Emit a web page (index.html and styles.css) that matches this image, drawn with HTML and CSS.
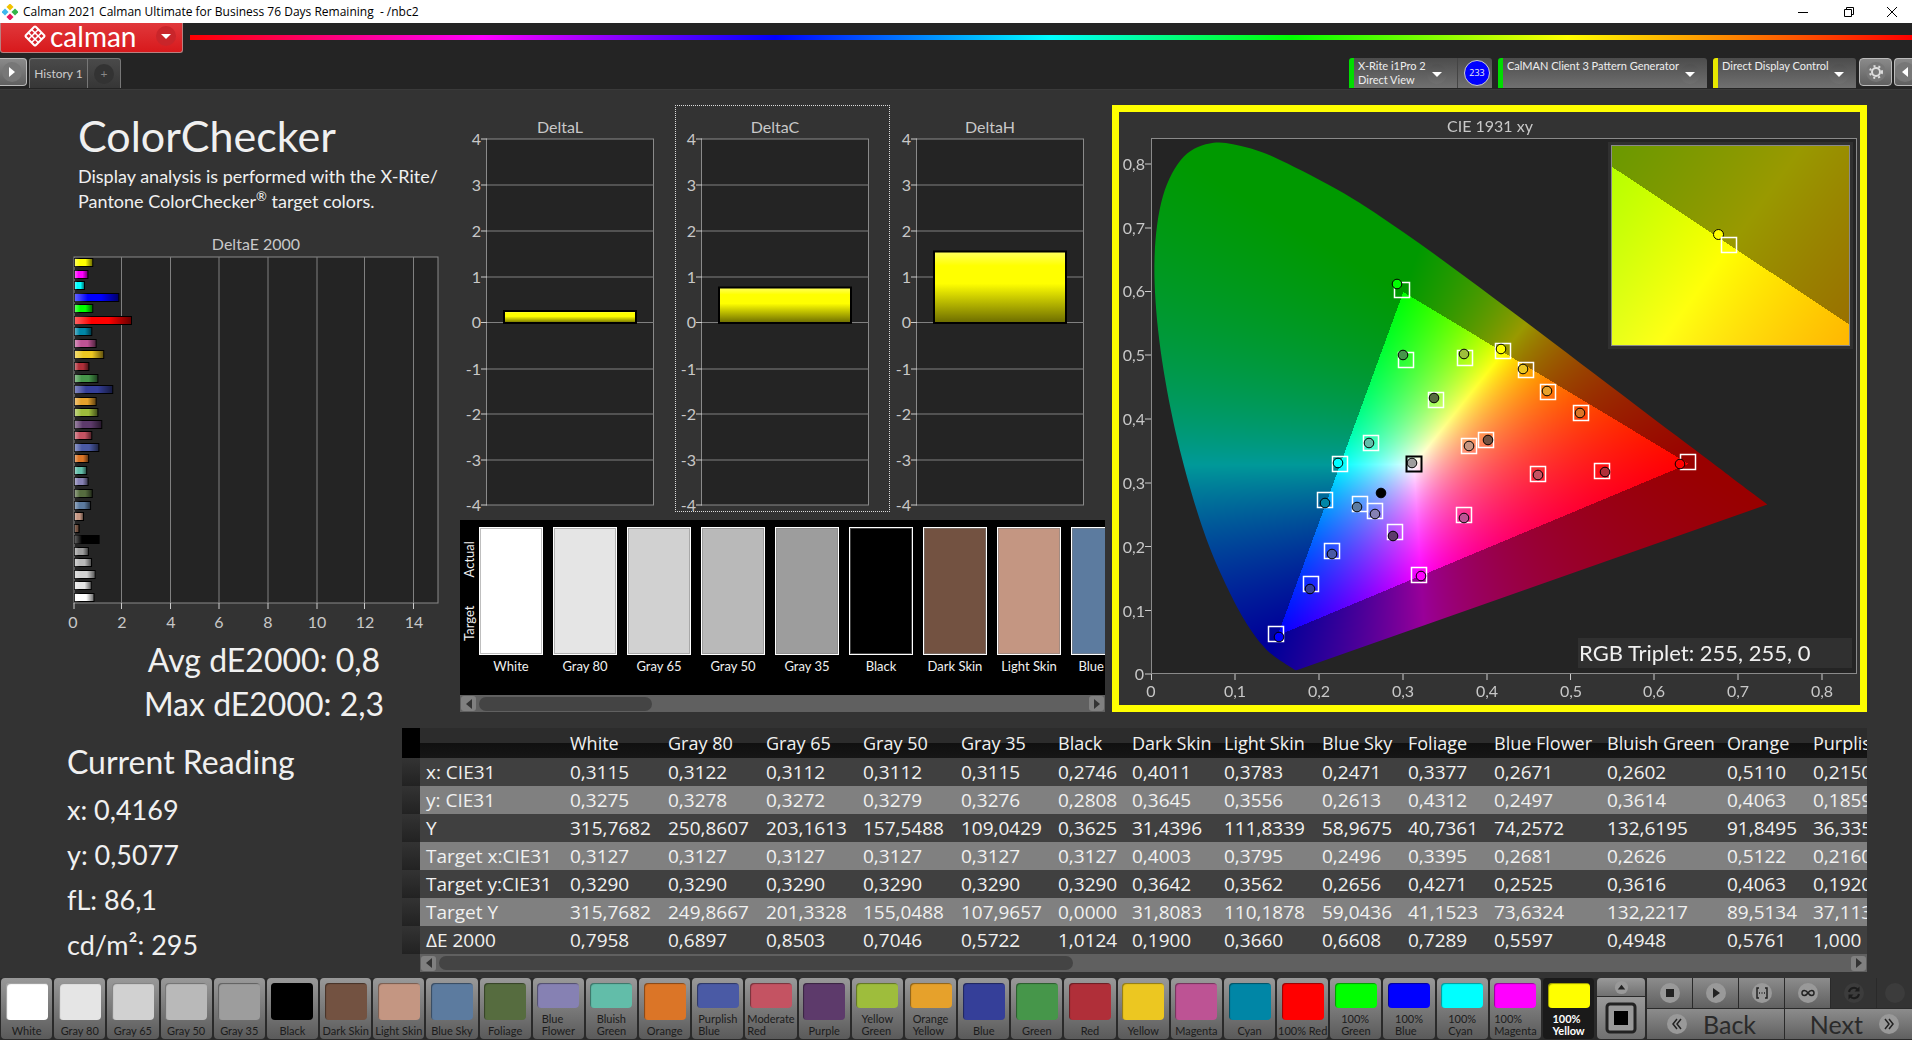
FILE: index.html
```html
<!doctype html>
<html lang="en">
<head>
  <meta charset="utf-8">
  <title>Calman 2021 Calman Ultimate for Business</title>
  <link rel="stylesheet" href="styles.css">
</head>
<body>
  <!-- Window title bar -->
  <div class="titlebar">
    <svg class="app-icon" viewBox="0 0 16 16">
      <rect x="5.500" y="0.500" width="5" height="5" transform="rotate(45 8 3)" fill="#f2c200"/>
      <rect x="0.500" y="5.500" width="5" height="5" transform="rotate(45 3 8)" fill="#3fb8ee"/>
      <rect x="10.500" y="5.500" width="5" height="5" transform="rotate(45 13 8)" fill="#35b44a"/>
      <rect x="5.500" y="10.500" width="5" height="5" transform="rotate(45 8 13)" fill="#e8175d"/>
    </svg>
    <span class="titlebar-text">Calman 2021 Calman Ultimate for Business 76 Days Remaining &nbsp;- /nbc2</span>
    <button class="win-btn" aria-label="Minimize"><svg viewBox="0 0 12 12"><path d="M1 6.500h10"/></svg></button>
    <button class="win-btn" aria-label="Restore"><svg viewBox="0 0 12 12"><path d="M1.500 3.500h7v7h-7zM3.500 3.500v-2h7v7h-2"/></svg></button>
    <button class="win-btn" aria-label="Close"><svg viewBox="0 0 12 12"><path d="M1 1l10 10M11 1L1 11"/></svg></button>
  </div>

  <header class="header">
    <div class="brand-row">
      <button class="brand">
        <svg class="brand-icon" viewBox="0 0 24 24">
          <rect x="4" y="4" width="16" height="16" rx="2" transform="rotate(45 12 12)" fill="#fff"/>
          <g fill="#d8222a" transform="rotate(45 12 12)">
            <rect x="6" y="6" width="3" height="3"/><rect x="10.500" y="6" width="3" height="3"/><rect x="15" y="6" width="3" height="3"/>
            <rect x="6" y="10.500" width="3" height="3"/><rect x="10.500" y="10.500" width="3" height="3"/><rect x="15" y="10.500" width="3" height="3"/>
            <rect x="6" y="15" width="3" height="3"/><rect x="10.500" y="15" width="3" height="3"/><rect x="15" y="15" width="3" height="3"/>
          </g>
        </svg>
        <span class="brand-name">calman</span>
        <span class="caret caret-red"></span>
      </button>
      <div class="rainbow"></div>
    </div>
    <div class="tab-row">
      <button class="chrome-btn chrome-left" aria-label="Show panel"><svg viewBox="0 0 20 20"><circle cx="10" cy="10" r="10"/><path d="M7 5l6 5-6 5z"/></svg></button>
      <div class="tabs">
        <button class="tab">History 1</button>
        <button class="tab tab-add" aria-label="Add tab"><span>+</span></button>
      </div>
      <div class="devices">
        <div class="device device-green device-meter">
          <button class="device-main"><span>X-Rite i1Pro 2<br>Direct View</span><span class="caret"></span></button>
          <span class="meter-count">233</span>
        </div>
        <div class="device device-green device-source">
          <button class="device-main"><span>CalMAN Client 3 Pattern Generator</span><span class="caret"></span></button>
        </div>
        <div class="device device-yellow device-display">
          <button class="device-main"><span>Direct Display Control</span><span class="caret"></span></button>
        </div>
        <button class="chrome-btn chrome-gear" aria-label="Settings">
          <svg viewBox="0 0 20 20"><circle cx="10" cy="10" r="10"/><circle class="gear-teeth" cx="10" cy="10" r="6"/><circle class="gear-ring" cx="10" cy="10" r="4"/></svg>
        </button>
        <button class="chrome-btn chrome-right" aria-label="Show settings panel"><svg viewBox="0 0 20 20"><circle cx="10" cy="10" r="10"/><path d="M13 5l-6 5 6 5z"/></svg></button>
      </div>
    </div>
  </header>

  <main class="workspace">
    <div class="row-top">
      <section class="summary">
        <h1>ColorChecker</h1>
        <p class="intro">Display analysis is performed with the X-Rite/<br>Pantone ColorChecker<sup>®</sup> target colors.</p>
        <svg class="chart" viewBox="0 0 440 420">
          <defs>
            <linearGradient id="barShade">
              <stop offset="0" stop-color="#fff" stop-opacity=".4"/>
              <stop offset=".3" stop-color="#fff" stop-opacity="0"/>
              <stop offset=".6" stop-color="#000" stop-opacity="0"/>
              <stop offset="1" stop-color="#000" stop-opacity=".6"/>
            </linearGradient>
          </defs>
          <text class="label mid" x="256" y="36">DeltaE 2000</text>
          <rect class="plot" x="74" y="43" width="364" height="346"/>
          <path class="grid" d="M121.500 43v346M170.500 43v346M219 43v346M268 43v346M317 43v346M364.500 43v346M413.500 43v346"/>
          <path class="tick" d="M74 389v6M121.500 389v6M170.500 389v6M219 389v6M268 389v6M317 389v6M364.500 389v6M413.500 389v6"/>
          <g id="deBars"></g>
          <g class="label mid">
            <text x="73" y="414">0</text><text x="122" y="414">2</text><text x="171" y="414">4</text><text x="219" y="414">6</text>
            <text x="268" y="414">8</text><text x="317" y="414">10</text><text x="365" y="414">12</text><text x="414" y="414">14</text>
          </g>
        </svg>
        <p class="totals">Avg dE2000: 0,8<br>Max dE2000: 2,3</p>
      </section>

      <section class="middle">
        <div class="deltas">
          <svg class="chart" viewBox="0 0 215 407">
            <defs>
              <linearGradient id="yellowBar" x2="0" y2="1">
                <stop offset="0" stop-color="#ffff60"/>
                <stop offset=".2" stop-color="#ff0"/>
                <stop offset=".45" stop-color="#ff0"/>
                <stop offset="1" stop-color="#6b6b00"/>
              </linearGradient>
            </defs>
            <text class="label mid" x="100" y="28">DeltaL</text>
            <rect class="plot" x="26.500" y="34" width="167" height="366"/>
            <path class="grid" d="M27 80h167M27 126h167M27 172h167M27 217.500h167M27 264h167M27 309h167M27 355h167"/>
            <path class="tick" d="M21 34h6M21 80h6M21 126h6M21 172h6M21 217.500h6M21 264h6M21 309h6M21 355h6M21 400h6"/>
            <rect class="delta-bar" x="44" y="206" width="132" height="12"/>
            <g class="label end">
              <text x="21" y="40">4</text><text x="21" y="86">3</text><text x="21" y="132">2</text><text x="21" y="178">1</text><text x="21" y="223">0</text>
              <text x="21" y="270">-1</text><text x="21" y="315">-2</text><text x="21" y="361">-3</text><text x="21" y="406">-4</text>
            </g>
          </svg>
          <svg class="chart chart-selected" viewBox="0 0 215 407">
            <text class="label mid" x="100" y="28">DeltaC</text>
            <rect class="plot" x="26.500" y="34" width="167" height="366"/>
            <path class="grid" d="M27 80h167M27 126h167M27 172h167M27 217.500h167M27 264h167M27 309h167M27 355h167"/>
            <path class="tick" d="M21 34h6M21 80h6M21 126h6M21 172h6M21 217.500h6M21 264h6M21 309h6M21 355h6M21 400h6"/>
            <rect class="delta-bar" x="44" y="182.500" width="132" height="35.500"/>
            <g class="label end">
              <text x="21" y="40">4</text><text x="21" y="86">3</text><text x="21" y="132">2</text><text x="21" y="178">1</text><text x="21" y="223">0</text>
              <text x="21" y="270">-1</text><text x="21" y="315">-2</text><text x="21" y="361">-3</text><text x="21" y="406">-4</text>
            </g>
          </svg>
          <svg class="chart" viewBox="0 0 215 407">
            <text class="label mid" x="100" y="28">DeltaH</text>
            <rect class="plot" x="26.500" y="34" width="167" height="366"/>
            <path class="grid" d="M27 80h167M27 126h167M27 172h167M27 217.500h167M27 264h167M27 309h167M27 355h167"/>
            <path class="tick" d="M21 34h6M21 80h6M21 126h6M21 172h6M21 217.500h6M21 264h6M21 309h6M21 355h6M21 400h6"/>
            <rect class="delta-bar" x="44" y="146.500" width="132" height="71.500"/>
            <g class="label end">
              <text x="21" y="40">4</text><text x="21" y="86">3</text><text x="21" y="132">2</text><text x="21" y="178">1</text><text x="21" y="223">0</text>
              <text x="21" y="270">-1</text><text x="21" y="315">-2</text><text x="21" y="361">-3</text><text x="21" y="406">-4</text>
            </g>
          </svg>
        </div>
        <div class="compare">
          <div class="compare-side"><span>Actual</span><span>Target</span></div>
          <div class="compare-item"><div class="sample c-white"></div>White</div>
          <div class="compare-item"><div class="sample c-gray80"></div>Gray 80</div>
          <div class="compare-item"><div class="sample c-gray65"></div>Gray 65</div>
          <div class="compare-item"><div class="sample c-gray50"></div>Gray 50</div>
          <div class="compare-item"><div class="sample c-gray35"></div>Gray 35</div>
          <div class="compare-item"><div class="sample c-black"></div>Black</div>
          <div class="compare-item"><div class="sample c-darkskin"></div>Dark Skin</div>
          <div class="compare-item"><div class="sample c-lightskin"></div>Light Skin</div>
          <div class="compare-item"><div class="sample c-bluesky"></div>Blue Sky</div>
        </div>
        <div class="scroll">
          <button class="scroll-btn scroll-prev" aria-label="Scroll left"></button>
          <div class="scroll-track"><div class="scroll-thumb" style="width:28.500%"></div></div>
          <button class="scroll-btn scroll-next" aria-label="Scroll right"></button>
        </div>
      </section>

      <section class="cie">
        <canvas id="cie" width="741" height="593"></canvas>
        <svg class="chart" viewBox="0 0 741 593">
          <text class="label mid" x="371" y="20">CIE 1931 xy</text>
          <rect class="frame" x="32.500" y="26.500" width="705" height="535"/>
          <path class="tick" d="M26 52h6M26 116h6M26 179.500h6M26 243h6M26 307h6M26 371h6M26 434.500h6M26 498.500h6M26 562h6"/>
          <path class="tick" d="M32.500 562v6M116 562v6M200 562v6M284 562v6M368 562v6M451.500 562v6M535 562v6M619 562v6M703 562v6"/>
          <g class="label end">
            <text x="26" y="58">0,8</text><text x="26" y="122">0,7</text><text x="26" y="185">0,6</text><text x="26" y="249">0,5</text><text x="26" y="313">0,4</text>
            <text x="26" y="377">0,3</text><text x="26" y="441">0,2</text><text x="26" y="505">0,1</text><text x="25" y="568">0</text>
          </g>
          <g class="label mid">
            <text x="32" y="585">0</text><text x="116" y="585">0,1</text><text x="200" y="585">0,2</text><text x="284" y="585">0,3</text><text x="368" y="585">0,4</text>
            <text x="452" y="585">0,5</text><text x="535" y="585">0,6</text><text x="619" y="585">0,7</text><text x="703" y="585">0,8</text>
          </g>
          <g id="cieMarks"></g>
          <rect class="inset" x="492.500" y="33.500" width="238" height="200"/>
          <circle class="mark c-yellow100" cx="599.500" cy="122.500" r="5"/>
          <rect class="target" x="602.500" y="125.500" width="15" height="15"/>
          <rect class="triplet-box" x="459" y="526" width="274" height="30"/>
          <text class="triplet" x="460" y="549">RGB Triplet: 255, 255, 0</text>
        </svg>
      </section>
    </div>

    <div class="row-bottom">
      <section class="reading">
        <h2>Current Reading</h2>
        <p>x: 0,4169</p>
        <p>y: 0,5077</p>
        <p>fL: 86,1</p>
        <p>cd/m²: 295</p>
      </section>
      <section class="data">
        <div class="table-wrap">
          <table>
            <colgroup>
              <col class="w-gutter"><col class="w-label"><col class="w-98"><col class="w-98"><col class="w-97"><col class="w-98"><col class="w-97"><col class="w-74"><col class="w-92"><col class="w-98"><col class="w-86"><col class="w-86"><col class="w-113"><col class="w-120"><col class="w-86"><col class="w-120">
            </colgroup>
            <thead>
              <tr><th></th><th></th><th>White</th><th>Gray 80</th><th>Gray 65</th><th>Gray 50</th><th>Gray 35</th><th>Black</th><th>Dark Skin</th><th>Light Skin</th><th>Blue Sky</th><th>Foliage</th><th>Blue Flower</th><th>Bluish Green</th><th>Orange</th><th>Purplish Blue</th></tr>
            </thead>
            <tbody>
              <tr><td></td><td>x: CIE31</td><td>0,3115</td><td>0,3122</td><td>0,3112</td><td>0,3112</td><td>0,3115</td><td>0,2746</td><td>0,4011</td><td>0,3783</td><td>0,2471</td><td>0,3377</td><td>0,2671</td><td>0,2602</td><td>0,5110</td><td>0,2150</td></tr>
              <tr><td></td><td>y: CIE31</td><td>0,3275</td><td>0,3278</td><td>0,3272</td><td>0,3279</td><td>0,3276</td><td>0,2808</td><td>0,3645</td><td>0,3556</td><td>0,2613</td><td>0,4312</td><td>0,2497</td><td>0,3614</td><td>0,4063</td><td>0,1859</td></tr>
              <tr><td></td><td>Y</td><td>315,7682</td><td>250,8607</td><td>203,1613</td><td>157,5488</td><td>109,0429</td><td>0,3625</td><td>31,4396</td><td>111,8339</td><td>58,9675</td><td>40,7361</td><td>74,2572</td><td>132,6195</td><td>91,8495</td><td>36,3353</td></tr>
              <tr><td></td><td>Target x:CIE31</td><td>0,3127</td><td>0,3127</td><td>0,3127</td><td>0,3127</td><td>0,3127</td><td>0,3127</td><td>0,4003</td><td>0,3795</td><td>0,2496</td><td>0,3395</td><td>0,2681</td><td>0,2626</td><td>0,5122</td><td>0,2160</td></tr>
              <tr><td></td><td>Target y:CIE31</td><td>0,3290</td><td>0,3290</td><td>0,3290</td><td>0,3290</td><td>0,3290</td><td>0,3290</td><td>0,3642</td><td>0,3562</td><td>0,2656</td><td>0,4271</td><td>0,2525</td><td>0,3616</td><td>0,4063</td><td>0,1920</td></tr>
              <tr><td></td><td>Target Y</td><td>315,7682</td><td>249,8667</td><td>201,3328</td><td>155,0488</td><td>107,9657</td><td>0,0000</td><td>31,8083</td><td>110,1878</td><td>59,0436</td><td>41,1523</td><td>73,6324</td><td>132,2217</td><td>89,5134</td><td>37,1131</td></tr>
              <tr><td></td><td>ΔE 2000</td><td>0,7958</td><td>0,6897</td><td>0,8503</td><td>0,7046</td><td>0,5722</td><td>1,0124</td><td>0,1900</td><td>0,3660</td><td>0,6608</td><td>0,7289</td><td>0,5597</td><td>0,4948</td><td>0,5761</td><td>1,000</td></tr>
            </tbody>
          </table>
        </div>
        <div class="scroll scroll-table">
          <button class="scroll-btn scroll-prev" aria-label="Scroll left"></button>
          <div class="scroll-track"><div class="scroll-thumb" style="width:45%"></div></div>
          <button class="scroll-btn scroll-next" aria-label="Scroll right"></button>
        </div>
      </section>
    </div>
  </main>

  <footer class="dock">
    <div class="patches">
      <button class="patch"><i class="c-white"></i><span>White</span></button>
      <button class="patch"><i class="c-gray80"></i><span>Gray 80</span></button>
      <button class="patch"><i class="c-gray65"></i><span>Gray 65</span></button>
      <button class="patch"><i class="c-gray50"></i><span>Gray 50</span></button>
      <button class="patch"><i class="c-gray35"></i><span>Gray 35</span></button>
      <button class="patch"><i class="c-black"></i><span>Black</span></button>
      <button class="patch"><i class="c-darkskin"></i><span>Dark Skin</span></button>
      <button class="patch"><i class="c-lightskin"></i><span>Light Skin</span></button>
      <button class="patch"><i class="c-bluesky"></i><span>Blue Sky</span></button>
      <button class="patch"><i class="c-foliage"></i><span>Foliage</span></button>
      <button class="patch"><i class="c-blueflower"></i><span>Blue<br>Flower</span></button>
      <button class="patch"><i class="c-bluishgreen"></i><span>Bluish<br>Green</span></button>
      <button class="patch"><i class="c-orange"></i><span>Orange</span></button>
      <button class="patch"><i class="c-purplishblue"></i><span>Purplish<br>Blue</span></button>
      <button class="patch"><i class="c-moderatered"></i><span>Moderate<br>Red</span></button>
      <button class="patch"><i class="c-purple"></i><span>Purple</span></button>
      <button class="patch"><i class="c-yellowgreen"></i><span>Yellow<br>Green</span></button>
      <button class="patch"><i class="c-orangeyellow"></i><span>Orange<br>Yellow</span></button>
      <button class="patch"><i class="c-blue"></i><span>Blue</span></button>
      <button class="patch"><i class="c-green"></i><span>Green</span></button>
      <button class="patch"><i class="c-red"></i><span>Red</span></button>
      <button class="patch"><i class="c-yellow"></i><span>Yellow</span></button>
      <button class="patch"><i class="c-magenta"></i><span>Magenta</span></button>
      <button class="patch"><i class="c-cyan"></i><span>Cyan</span></button>
      <button class="patch"><i class="c-red100"></i><span>100% Red</span></button>
      <button class="patch"><i class="c-green100"></i><span>100%<br>Green</span></button>
      <button class="patch"><i class="c-blue100"></i><span>100%<br>Blue</span></button>
      <button class="patch"><i class="c-cyan100"></i><span>100%<br>Cyan</span></button>
      <button class="patch"><i class="c-magenta100"></i><span>100%<br>Magenta</span></button>
      <button class="patch patch-active"><i class="c-yellow100"></i><span>100%<br>Yellow</span></button>
    </div>
    <div class="window-ctl">
      <button class="ctl-up" aria-label="Expand"><svg viewBox="0 0 16 16"><circle cx="8" cy="8" r="7"/><path d="M4 10l4-5 4 5z"/></svg></button>
      <button class="ctl-pattern" aria-label="Pattern window"><svg viewBox="0 0 32 32"><rect class="ctl-ring" x="2" y="2" width="28" height="28" rx="3"/><rect x="9" y="9" width="14" height="14" fill="#000"/></svg></button>
    </div>
    <div class="transport">
      <button aria-label="Stop"><svg viewBox="0 0 20 20"><circle cx="10" cy="10" r="10"/><path d="M6 6h8v8H6z"/></svg></button>
      <button aria-label="Read"><svg viewBox="0 0 20 20"><circle cx="10" cy="10" r="10"/><path d="M7 5l7 5-7 5z"/></svg></button>
      <button aria-label="Read series"><svg viewBox="0 0 20 20"><circle cx="10" cy="10" r="10"/><path class="line" d="M7 5H5v10h2M13 5h2v10h-2M7 10h1M9.500 10h1M12 10h1"/></svg></button>
      <button aria-label="Read continuously"><svg viewBox="0 0 20 20"><circle cx="10" cy="10" r="10"/><path class="line" d="M10 10C8 7 4 6.500 4 10s4 3 6 0s6-3.500 6 0s-4 3-6 0"/></svg></button>
      <button class="dim" aria-label="Refresh"><svg viewBox="0 0 20 20"><circle cx="10" cy="10" r="10"/><path class="line thick" d="M5 9a5 5 0 0 1 9-2M15 11a5 5 0 0 1-9 2"/><path d="M15.500 3.500v5h-5zM4.500 16.500v-5h5z"/></svg></button>
      <button class="dim" aria-label="More"><svg viewBox="0 0 20 20"><circle cx="10" cy="10" r="10"/></svg></button>
      <button class="nav"><svg viewBox="0 0 20 20"><circle cx="10" cy="10" r="10"/><path class="line" d="M10 5l-4 5 4 5M14 5l-4 5 4 5"/></svg>Back</button>
      <button class="nav">Next<svg viewBox="0 0 20 20"><circle cx="10" cy="10" r="10"/><path class="line" d="M6 5l4 5-4 5M10 5l4 5-4 5"/></svg></button>
    </div>
  </footer>
  <script src="charts.js"></script>
</body>
</html>
```
FILE: styles.css
```css
:root {
  --bg: #333;
  --bg-dark: #242424;
  --line: #8a8a8a;
  --text: #f0f0f0;
  --label: #c8c8c8;
  --ui: Lato, "Open Sans", sans-serif;
  --grid-font: "Open Sans", "Noto Sans", sans-serif;
}
* { box-sizing: border-box; margin: 0; padding: 0; }
body {
  display: flex;
  flex-direction: column;
  min-height: 100vh;
  background: var(--bg);
  color: var(--text);
  font-family: var(--ui);
  overflow: hidden;
}
button {
  border: none;
  background: none;
  color: inherit;
  font: inherit;
  cursor: pointer;
}
svg { display: block; }

/* Patch colors */
.c-white { --c: #fff; }
.c-gray80 { --c: #e5e5e5; }
.c-gray65 { --c: #d1d1d1; }
.c-gray50 { --c: #b9b9b9; }
.c-gray35 { --c: #9d9d9d; }
.c-black { --c: #000; }
.c-darkskin { --c: #735241; }
.c-lightskin { --c: #c49682; }
.c-bluesky { --c: #5c7b9f; }
.c-foliage { --c: #566c3f; }
.c-blueflower { --c: #8681b3; }
.c-bluishgreen { --c: #62bda9; }
.c-orange { --c: #db7527; }
.c-purplishblue { --c: #4a5aa5; }
.c-moderatered { --c: #c45362; }
.c-purple { --c: #5d3a6b; }
.c-yellowgreen { --c: #9ebd3c; }
.c-orangeyellow { --c: #e6a12b; }
.c-blue { --c: #353f99; }
.c-green { --c: #46964a; }
.c-red { --c: #b02f39; }
.c-yellow { --c: #ecc721; }
.c-magenta { --c: #bd5394; }
.c-cyan { --c: #0086a6; }
.c-red100 { --c: #f00; }
.c-green100 { --c: #0f0; }
.c-blue100 { --c: #00f; }
.c-cyan100 { --c: #0ff; }
.c-magenta100 { --c: #f0f; }
.c-yellow100 { --c: #ff0; }

/* Title bar */
.titlebar {
  display: flex;
  align-items: center;
  height: 23px;
  padding-left: 2px;
  background: #fff;
  color: #000;
  font: 12px/23px var(--grid-font);
}
.app-icon { width: 16px; height: 16px; }
.titlebar-text { flex: 1; padding-left: 5px; }
.win-btn { width: 46px; height: 23px; }
.win-btn svg { width: 12px; height: 12px; margin: 0 auto; }
.win-btn path { fill: none; stroke: #000; }
.win-btn:last-child { width: 40px; }

/* Header */
.header { background: var(--bg-dark); }
.brand-row { display: flex; align-items: flex-start; height: 35px; }
.brand {
  display: flex;
  align-items: center;
  width: 183px;
  height: 30px;
  padding: 0 6px 3px 22px;
  border: 1px solid #b98080;
  border-top: none;
  border-radius: 0 0 3px 3px;
  background: linear-gradient(#e0383b, #d8191c);
  color: #fff;
}
.brand-icon { width: 24px; height: 24px; }
.brand-name { flex: 1; padding-left: 3px; text-align: left; font-size: 28px; line-height: 24px; }
.caret {
  flex: none;
  display: flex;
  align-items: center;
  justify-content: center;
  width: 20px;
  height: 20px;
  border-radius: 50%;
  background: linear-gradient(#505050, #707070);
}
.caret::after {
  content: "";
  border: 5px solid transparent;
  border-top-color: #fff;
  border-bottom: none;
}
.caret-red { background: #c9252a; }
.rainbow {
  flex: 1;
  height: 5px;
  margin: 12px 0 0 7px;
  background: linear-gradient(90deg, #f00, #f0f 17%, #00f 34%, #0ff 50%, #0f0 64%, #ff0 80%, #f00);
}
.tab-row { display: flex; align-items: flex-start; height: 31px; }
.chrome-btn {
  height: 28px;
  border: 1px solid #bbb;
  border-radius: 4px;
  background: linear-gradient(#8a8a8a, #606060);
}
.chrome-btn svg { width: 20px; height: 20px; }
.chrome-btn circle { fill: #777; }
.chrome-btn path { fill: #fff; }
.chrome-btn .gear-teeth { fill: none; stroke: #ddd; stroke-width: 2; stroke-dasharray: 2 3; }
.chrome-btn .gear-ring { fill: none; stroke: #ddd; stroke-width: 2; }
.chrome-left { width: 27px; padding-left: 2px; border-left: none; border-radius: 0 4px 4px 0; }
.chrome-gear { width: 33px; margin-left: 3px; padding-left: 6px; }
.chrome-right { width: 18px; margin-left: 2px; border-right: none; border-radius: 4px 0 0 4px; overflow: hidden; }
.tabs { display: flex; flex: 1; margin-left: 2px; }
.tab {
  height: 30px;
  width: 59px;
  border: 1px solid #777;
  border-bottom: none;
  border-radius: 3px 0 0 0;
  background: linear-gradient(#4a4a4a, #363636);
  color: #ccc;
  font-size: 12px;
}
.tab-add { width: 33px; border-left: none; border-radius: 0 3px 0 0; }
.tab-add span {
  display: block;
  width: 20px;
  height: 20px;
  margin: 0 auto;
  border-radius: 50%;
  background: #333;
  color: #888;
  line-height: 19px;
}
.devices { display: flex; }
.device {
  display: flex;
  height: 30px;
  margin-right: 6px;
  border-left: 5px solid #0d0;
  border-radius: 3px 3px 0 0;
  background: linear-gradient(#4c4c4c, #707070);
}
.device-yellow { border-left-color: #e8e800; margin-right: 0; }
.device-main {
  display: flex;
  flex: 1;
  justify-content: space-between;
  align-items: flex-start;
  min-width: 0;
  padding: 1px 7px 0 4px;
  color: #eee;
  font-size: 11px;
  line-height: 14px;
  text-align: left;
  white-space: nowrap;
}
.device-main .caret { margin-top: 5px; }
.device-meter { width: 143px; }
.device-meter .device-main { padding-right: 10px; border-right: 1px solid #444; }
.device-source { width: 209px; }
.device-display { width: 143px; }
.meter-count {
  flex: none;
  width: 26px;
  height: 26px;
  margin: 2px 2px 0 6px;
  border: 1px solid #ccc;
  border-radius: 50%;
  background: #00f;
  font: 9px/24px var(--grid-font);
  text-align: center;
}

/* Workspace */
.workspace { flex: 1; padding: 15px 45px 0 0; border-top: 1px solid #3a3a3a; }
.row-top { display: grid; grid-template-columns: 460fr 645fr 762fr; align-items: start; }
.row-top > section { min-width: 0; }
.summary { padding-right: 20px; }
.summary h1 { margin: 6px 0 0 78px; font-size: 43px; line-height: 50px; font-weight: 400; }
.intro { margin: 3px 0 0 78px; font-size: 18px; line-height: 25px; white-space: nowrap; }
.intro sup { font-size: 13px; line-height: 1px; }
.totals { margin: 4px 0 0; padding-left: 88px; text-align: center; font-size: 32px; line-height: 44px; }

/* Charts */
.chart { width: 100%; height: auto; font-size: 16px; }
.label { fill: var(--label); }
.mid { text-anchor: middle; }
.end { text-anchor: end; }
.plot { fill: var(--bg-dark); stroke: var(--line); }
.frame, .inset { fill: none; stroke: var(--line); }
.grid { fill: none; stroke: #808080; }
.tick { fill: none; stroke: #ccc; }
.bar { fill: var(--c); stroke: #000; }
.bar-shade { fill: url(#barShade); }
.delta-bar { fill: url(#yellowBar); stroke: #000; stroke-width: 2; }
.deltas { display: flex; }
.deltas .chart { flex: 1; min-width: 0; }
.chart-selected { outline: 1px dotted #ddd; outline-offset: -1px; }
.target { fill: none; stroke: #fff; stroke-width: 1.5; }
.target-white { stroke: #000; stroke-width: 2; }
.mark { fill: var(--c); stroke: #000; }
.triplet-box { fill: #303030; }
.triplet { fill: var(--text); font-size: 22px; }

/* Actual / target strip */
.compare {
  display: flex;
  gap: 10px;
  height: 175px;
  margin-top: 8px;
  padding-top: 7px;
  background: #000;
  overflow: hidden;
}
.compare-side {
  display: flex;
  flex: none;
  flex-direction: row-reverse;
  justify-content: space-around;
  width: 128px;
  height: 19px;
  margin-right: -119px;
  font-size: 13px;
  line-height: 19px;
  transform: rotate(-90deg) translateX(-128px);
  transform-origin: 0 0;
}
.compare-item {
  flex: none;
  width: 64px;
  font-size: 13px;
  line-height: 22px;
  text-align: center;
  white-space: nowrap;
}
.sample { height: 128px; border: 1px solid #fff; background: var(--c); box-shadow: inset 0 0 0 1px rgba(128, 128, 128, 0.5); }

/* Scroll bars */
.scroll { display: flex; align-items: center; height: 17px; padding: 0 1px; background: #606060; }
.scroll-track { flex: 1; padding: 0 3px; }
.scroll-thumb { height: 14px; border-radius: 7px; background: #444; }
.scroll-btn { display: flex; align-items: center; justify-content: center; width: 15px; height: 15px; border-radius: 3px; background: #808080; }
.scroll-btn::after { content: ""; border: 5px solid transparent; }
.scroll-prev::after { border-right: 6px solid #333; border-left: none; }
.scroll-next::after { border-left: 6px solid #333; border-right: none; }

/* CIE chart */
.cie { display: grid; margin-left: 7px; border: 7px solid #ff0; }
.cie canvas, .cie svg { grid-area: 1 / 1; width: 100%; height: auto; }

/* Reading and table */
.row-bottom { display: grid; grid-template-columns: 402fr 1465fr; margin-top: 2px; }
.reading { padding-left: 67px; font-size: 27px; line-height: 45px; }
.reading h2 { margin: 12px 0 3px; font-size: 32px; line-height: 44px; font-weight: 400; }
.data { min-width: 0; }
.table-wrap { overflow: hidden; }
table { width: 1487px; table-layout: fixed; border-collapse: collapse; font-family: var(--grid-font); }
th, td { padding: 0 0 0 6px; text-align: left; font-weight: 400; white-space: nowrap; }
th { height: 30px; background: linear-gradient(#2c2c2c 50%, #101010 50%, #161616); font-size: 18px; line-height: 28px; }
td { height: 28px; background: #404040; font-size: 19px; line-height: 28px; }
tr:nth-child(even) td { background: #808080; }
th:first-child { background: #000; }
td:first-child, tr:nth-child(even) td:first-child { background: linear-gradient(#333, #222); }
.w-gutter { width: 18px; }
.w-label { width: 144px; }
.w-74 { width: 74px; }
.w-86 { width: 86px; }
.w-92 { width: 92px; }
.w-97 { width: 97px; }
.w-98 { width: 98px; }
.w-113 { width: 113px; }
.w-120 { width: 120px; }
.scroll-table { height: 18px; margin-left: 18px; }

/* Bottom dock */
.dock { display: flex; height: 62px; background: #2a2a2a; color: #1c1c1c; }
.patches { display: flex; flex: 1; gap: 2px; padding: 0 3px 0 1px; }
.patch {
  display: flex;
  flex: 1 1 0;
  flex-direction: column;
  align-items: center;
  min-width: 0;
  height: 61px;
  padding: 5px 0 2px;
  border-radius: 4px;
  background: linear-gradient(#999, #5a5a5a);
  font-size: 11px;
  line-height: 12px;
  text-align: left;
  white-space: nowrap;
}
.patch i {
  flex: 1;
  width: 42px;
  border-radius: 4px;
  background: var(--c);
  box-shadow: inset 1px 1px 1px rgba(0, 0, 0, 0.4);
}
.patch span { padding-top: 5px; }
.patch-active { background: #1a1a1a; color: #fff; font-weight: 700; }
.window-ctl { display: flex; flex-direction: column; gap: 1px; width: 48px; }
.window-ctl button { background: linear-gradient(#999, #707070); }
.window-ctl circle, .transport circle { fill: #999; }
.window-ctl path, .transport path { fill: #222; }
.ctl-up { height: 18px; border-radius: 4px 4px 0 0; }
.ctl-up svg { width: 15px; height: 15px; margin: 0 auto; }
.ctl-pattern { height: 42px; border-radius: 0 0 4px 4px; }
.ctl-pattern svg { width: 32px; height: 32px; margin: 0 auto; }
.ctl-ring { fill: #999; stroke: #222; stroke-width: 3; }
.transport {
  display: grid;
  grid-template-columns: repeat(5, 45px) 1fr;
  grid-template-rows: 30px 30px;
  gap: 1px;
  width: 267px;
  padding-left: 2px;
}
.transport button { background: linear-gradient(#8c8c8c, #606060); }
.transport svg { width: 20px; height: 20px; margin: 0 auto; }
.transport .line { fill: none; stroke: #222; stroke-width: 1.5; }
.transport .thick { stroke-width: 2; }
.transport .dim { background: #333; }
.transport .dim circle { fill: #3c3c3c; }
.transport .dim path { fill: #1c1c1c; }
.transport .dim .line { fill: none; stroke: #1c1c1c; }
.transport .nav {
  display: flex;
  grid-column: span 3;
  align-items: center;
  gap: 16px;
  padding: 0 13px 0 20px;
  color: #2a2a2a;
  font-size: 25px;
  line-height: 30px;
}
.transport .nav:last-child { justify-content: flex-end; }
.transport .nav svg { margin: 0; }
```
FILE: charts.js
```js
const SVG = 'http://www.w3.org/2000/svg';

function add(parent, tag, attrs) {
  const el = document.createElementNS(SVG, tag);
  for (const k in attrs) el.setAttribute(k, attrs[k]);
  parent.appendChild(el);
}

// DeltaE 2000 per patch, last measured on top
const deltaE = [
  ['yellow100', 0.75], ['magenta100', 0.55], ['cyan100', 0.41], ['blue100', 1.82], ['green100', 0.75],
  ['red100', 2.34], ['cyan', 0.71], ['magenta', 0.89], ['yellow', 1.2], ['red', 0.59],
  ['green', 0.96], ['blue', 1.57], ['orangeyellow', 0.89], ['yellowgreen', 0.96], ['purple', 1.12],
  ['moderatered', 0.71], ['purplishblue', 1.0], ['orange', 0.58], ['bluishgreen', 0.5], ['blueflower', 0.56],
  ['foliage', 0.73], ['bluesky', 0.66], ['lightskin', 0.37], ['darkskin', 0.19], ['black', 1.01],
  ['gray35', 0.57], ['gray50', 0.7], ['gray65', 0.85], ['gray80', 0.69], ['white', 0.8]
];
const bars = document.getElementById('deBars');
deltaE.forEach(([name, value], i) => {
  const box = { x: 74.5, y: 44.5 + Math.round(i * 11.55), width: value * 24.35, height: 8 };
  add(bars, 'rect', { ...box, class: 'bar c-' + name });
  add(bars, 'rect', { ...box, class: 'bar-shade' });
});

// name, target x/y, measured x/y in chart units
const marks = [
  ['green100', 283, 178, 278, 172], ['green', 287, 248, 284, 243], ['yellowgreen', 346, 246, 345, 242],
  ['foliage', 317, 288, 315, 286], ['yellow100', 384, 239, 382, 237], ['yellow', 407, 258, 404, 257],
  ['orangeyellow', 429, 280, 428, 279], ['orange', 462, 301, 461, 301], ['bluishgreen', 252, 331, 250, 331],
  ['cyan100', 221, 352, 219, 351], ['lightskin', 350, 334, 350, 334], ['darkskin', 367, 328, 369, 328],
  ['cyan', 206, 388, 206, 391], ['bluesky', 241, 392, 238, 395], ['blueflower', 256, 399, 256, 402],
  ['purple', 276, 420, 274, 424], ['magenta', 345, 403, 345, 406], ['purplishblue', 213, 439, 213, 442],
  ['blue', 192, 472, 191, 477], ['magenta100', 300, 463, 302, 464], ['blue100', 157, 522, 160, 525],
  ['moderatered', 419, 362, 419, 363], ['red', 483, 359, 486, 360], ['red100', 569, 350, 561, 352]
];
const layer = document.getElementById('cieMarks');
marks.forEach(([name, tx, ty, mx, my]) => {
  add(layer, 'rect', { x: tx - 7.5, y: ty - 7.5, width: 15, height: 15, class: 'target' });
  add(layer, 'circle', { cx: mx, cy: my, r: 4.8, class: 'mark c-' + name });
});
add(layer, 'rect', { x: 287.5, y: 344.5, width: 15, height: 15, class: 'target target-white' });
add(layer, 'circle', { cx: 293, cy: 351, r: 4.8, class: 'mark c-gray35' });
add(layer, 'circle', { cx: 262, cy: 381, r: 4.8, class: 'mark c-black' });

// Spectral locus, CIE 1931 2 degree observer
const locus = [
  [.1741, .005], [.1714, .0051], [.1644, .0109], [.1566, .0177], [.144, .0297], [.1355, .0399],
  [.1241, .0578], [.1096, .0868], [.0913, .1327], [.0687, .2007], [.0454, .295], [.0235, .4127],
  [.0082, .5384], [.0039, .6548], [.0139, .7502], [.0389, .812], [.0743, .8338], [.1142, .8262],
  [.1547, .8059], [.2296, .7543], [.3016, .6923], [.3731, .6245], [.4441, .5547], [.5125, .4866],
  [.5752, .4242], [.627, .3725], [.6658, .334], [.6915, .3083], [.719, .2809], [.7347, .2653]
];

// Brightest color at x,y; dimmed outside of Rec.709
function xyColor(x, y) {
  const X = x / y, Z = (1 - x - y) / y;
  const r = 3.2406 * X - 1.5372 - 0.4986 * Z;
  const g = -0.9689 * X + 1.8758 + 0.0415 * Z;
  const b = 0.0557 * X - 0.204 + 1.057 * Z;
  const m = Math.max(r, g, b);
  const k = Math.min(r, g, b) < 0 ? 153 : 255;
  return [k * r / m, k * g / m, k * b / m];
}

function paint(w, h, toX, toY) {
  const c = document.createElement('canvas');
  c.width = w;
  c.height = h;
  const ctx = c.getContext('2d');
  const img = ctx.createImageData(w, h);
  for (let j = 0; j < h; j++) {
    for (let i = 0; i < w; i++) {
      const rgb = xyColor(toX(i), Math.max(toY(j), 0.001));
      const p = (j * w + i) * 4;
      img.data[p] = rgb[0];
      img.data[p + 1] = rgb[1];
      img.data[p + 2] = rgb[2];
      img.data[p + 3] = 255;
    }
  }
  ctx.putImageData(img, 0, 0);
  return c;
}

const ctx = document.getElementById('cie').getContext('2d');
const X0 = 32.3, Y0 = 561.3, SX = 838.5, SY = 636.3;
ctx.fillStyle = '#242424';
ctx.fillRect(32, 26, 706, 536);

const pts = locus.map(([x, y]) => [X0 + x * SX, Y0 - y * SY]);
ctx.save();
ctx.beginPath();
ctx.moveTo(pts[0][0], pts[0][1]);
for (let i = 0; i < pts.length - 1; i++) {
  const a = pts[Math.max(i - 1, 0)], b = pts[i], c = pts[i + 1], d = pts[Math.min(i + 2, pts.length - 1)];
  ctx.bezierCurveTo(b[0] + (c[0] - a[0]) / 6, b[1] + (c[1] - a[1]) / 6,
    c[0] - (d[0] - b[0]) / 6, c[1] - (d[1] - b[1]) / 6, c[0], c[1]);
}
ctx.closePath();
ctx.clip();
ctx.drawImage(paint(741, 593, i => (i - X0) / SX, j => (Y0 - j) / SY), 0, 0);
ctx.restore();

// Zoomed view around the current target
ctx.fillStyle = '#303030';
ctx.fillRect(489, 30, 245, 207);
ctx.drawImage(paint(238, 200, i => 0.4193 + (i - 118) / 4780, j => 0.5053 - (j - 99) / 4000), 493, 34);
```
